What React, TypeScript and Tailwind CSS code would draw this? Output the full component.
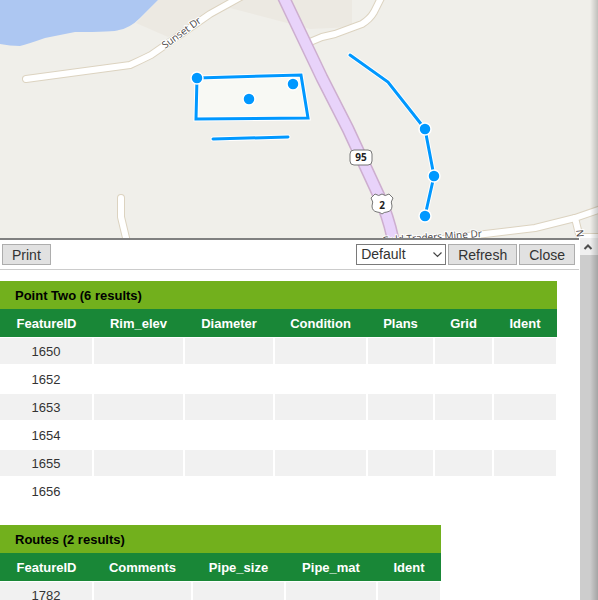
const layers = [
  {
    title: 'Point Two',
    count: 6,
    fields: [
      { name: 'FeatureID', width: 'w-[93px]' },
      { name: 'Rim_elev', width: 'w-[91px]' },
      { name: 'Diameter', width: 'w-[90px]' },
      { name: 'Condition', width: 'w-[93px]' },
      { name: 'Plans', width: 'w-[67px]' },
      { name: 'Grid', width: 'w-[59px]' },
      { name: 'Ident', width: 'w-[64px]' },
    ],
    ids: [1650, 1652, 1653, 1654, 1655, 1656],
  },
  {
    title: 'Routes',
    count: 2,
    fields: [
      { name: 'FeatureID', width: 'w-[93px]' },
      { name: 'Comments', width: 'w-[99px]' },
      { name: 'Pipe_size', width: 'w-[93px]' },
      { name: 'Pipe_mat', width: 'w-[92px]' },
      { name: 'Ident', width: 'w-[64px]' },
    ],
    ids: [1782],
  },
]

const roads = [
  'M26 79 L130 65 Q141 60 151 55 L210 14 L246 -6',
  'M310 42 L322 37 L335 34 L362 24 Q370 19 374 12 L382 -4',
  'M121 198 V217 L127 242',
  'M400 244 L485 234 L535 228 L575 218 L604 208',
  'M575 218 L581 242',
  'M582 237 H604',
]

const highway = 'M281 -8 L322 78 L348 129 Q366 168 379 196 Q389 218 394 244'

const points = [
  [197, 78],
  [293, 84],
  [249, 99],
  [425, 129],
  [434, 176],
  [425, 216],
]

const MapView = () => (
  <svg
    viewBox="0 0 598 238"
    preserveAspectRatio="xMinYMin slice"
    className="block h-full w-full"
    role="img"
    aria-label="Map"
  >
    <rect width="598" height="238" fill="#f0efea" />
    <path d="M158 0 H352 V27 L310 29 L230 8 L168 37 L136 23 Z" fill="#ece9e2" />
    <path d="M0 0 H158 L140 18 Q130 28 119 30 Q114 32 75 32 Q60 35 45 38 Q28 44 20 46 Q10 46 0 44 Z" fill="#adc7f2" />
    <g fill="none" strokeLinecap="round" strokeLinejoin="round">
      {roads.map((d) => (
        <path key={d} d={d} stroke="#dcd3c0" strokeWidth="8" />
      ))}
      {roads.map((d) => (
        <path key={d} d={d} stroke="#fff" strokeWidth="6" />
      ))}
      <path d={highway} stroke="#cdaecf" strokeWidth="13" />
      <path d={highway} stroke="#e8d3fa" strokeWidth="10" />
    </g>
    <g
      fill="#4a4545"
      stroke="#fff"
      strokeWidth="2"
      paintOrder="stroke"
      className="font-['Open_Sans',sans-serif] text-[10px] font-medium"
    >
      <text transform="translate(165 49) rotate(-36)">Sunset Dr</text>
      <text transform="translate(482 237) rotate(-4)" textAnchor="end">Gold Traders Mine Dr</text>
      <text transform="translate(576 230) rotate(84)">N</text>
    </g>
    <g stroke="#777" className="font-['Open_Sans',sans-serif] text-[10px] font-bold" textAnchor="middle">
      <rect x="350" y="150" width="22" height="15" rx="4" fill="#fff" />
      <text x="361" y="161" fill="#222" stroke="none">95</text>
      <path
        d="M375 194 Q379 197 382 194 Q385 197 389 194 L393 198 Q390 202 392 206 Q392 211 387 212 Q384 212 382 214 Q380 212 377 212 Q372 211 372 206 Q374 202 371 198 Z"
        fill="#fff"
      />
      <text x="382" y="209" fill="#222" stroke="none">2</text>
    </g>
    <path d="M197 78 L301 75 L308 118 L196 119 Z" fill="#fbfdf8" fillOpacity=".7" />
    {['#fff', '#0098ff'].map((color) => (
      <g key={color} fill="none" stroke={color} strokeWidth={color === '#fff' ? 5 : 3} strokeLinecap="round">
        <path d="M197 78 L301 75 L308 118 L196 119 Z" />
        <path d="M213 139 L288 137" />
        <path d="M350 55 L388 82 L425 129 L434 176 L425 216" />
      </g>
    ))}
    {points.map(([x, y]) => (
      <circle key={`${x}-${y}`} cx={x} cy={y} r="6" fill="#0098ff" stroke="#fff" strokeWidth="1.5" />
    ))}
  </svg>
)

const ToolbarButton = ({ label }: { label: string }) => (
  <button className="h-[21px] border border-[#adadad] bg-[#e1e1e1] px-[9px] pt-px text-[14px] leading-[18px]">
    {label}
  </button>
)

const Toolbar = () => (
  <div className="flex h-[30px] items-center justify-between border-b border-[#ccc] pl-0.5 pr-1">
    <ToolbarButton label="Print" />
    <div className="flex items-center gap-0.5">
      <div className="relative">
        <select
          aria-label="Format"
          className="block h-[21px] w-[90px] appearance-none border border-[#7a7a7a] bg-white px-1 text-[14px] leading-[19px]"
        >
          <option>Default</option>
        </select>
        <svg viewBox="0 0 9 6" className="pointer-events-none absolute right-1 top-2 h-[6px] w-[9px]" aria-hidden="true">
          <path d="M.5 .5 L4.5 4.5 L8.5 .5" fill="none" stroke="#444" strokeWidth="1.2" />
        </svg>
      </div>
      <ToolbarButton label="Refresh" />
      <ToolbarButton label="Close" />
    </div>
  </div>
)

const ResultTable = ({ title, count, fields, ids }: (typeof layers)[number]) => (
  <table className="w-min table-fixed border-separate border-spacing-0 text-center text-[13px] leading-[18px]">
    <colgroup>
      {fields.map(({ name, width }) => (
        <col key={name} className={width} />
      ))}
    </colgroup>
    <thead>
      <tr className="h-7 bg-[#72b01d] text-left text-black">
        <th colSpan={fields.length} className="px-[15px] pt-0.5">
          {title} ({count} results)
        </th>
      </tr>
      <tr className="h-7 bg-[#198737] text-white">
        {fields.map(({ name }) => (
          <th key={name} className="pt-0.5">{name}</th>
        ))}
      </tr>
    </thead>
    <tbody>
      {ids.map((id) => (
        <tr key={id} className="h-7 odd:bg-[#f1f1f1]">
          {fields.map(({ name }, i) => (
            <td key={name} className="border border-white pt-0.5 first:border-l-0">
              {i === 0 ? id : ''}
            </td>
          ))}
        </tr>
      ))}
    </tbody>
  </table>
)

const ScrollTrack = () => (
  <div className="flex w-[19px] shrink-0 flex-col border-l border-white bg-[#cdcdcd]" aria-hidden="true">
    <div className="flex h-[17px] items-center justify-center bg-[#f0f0f0] pr-[3px]">
      <svg viewBox="0 0 10 8" className="h-2 w-2.5">
        <path d="M1.5 6 L5 2.5 L8.5 6" fill="none" stroke="#505050" strokeWidth="2" />
      </svg>
    </div>
  </div>
)

const App = () => (
  <div className="relative flex h-screen flex-col overflow-hidden bg-white font-['Liberation_Sans',Arial,sans-serif] text-[#333]">
    <div className="h-[238px] shrink-0">
      <MapView />
    </div>
    <div className="flex min-h-0 flex-1">
      <div className="min-w-0 flex-1 overflow-hidden border-t-2 border-[#808080]">
        <Toolbar />
        <div className="flex flex-col items-start gap-5 pt-[11px]">
          {layers.map((layer) => (
            <ResultTable key={layer.title} {...layer} />
          ))}
        </div>
      </div>
      <ScrollTrack />
    </div>
    <div className="pointer-events-none absolute inset-y-0 right-0 w-2 bg-linear-to-r from-transparent to-black/20" />
  </div>
)

export default App
